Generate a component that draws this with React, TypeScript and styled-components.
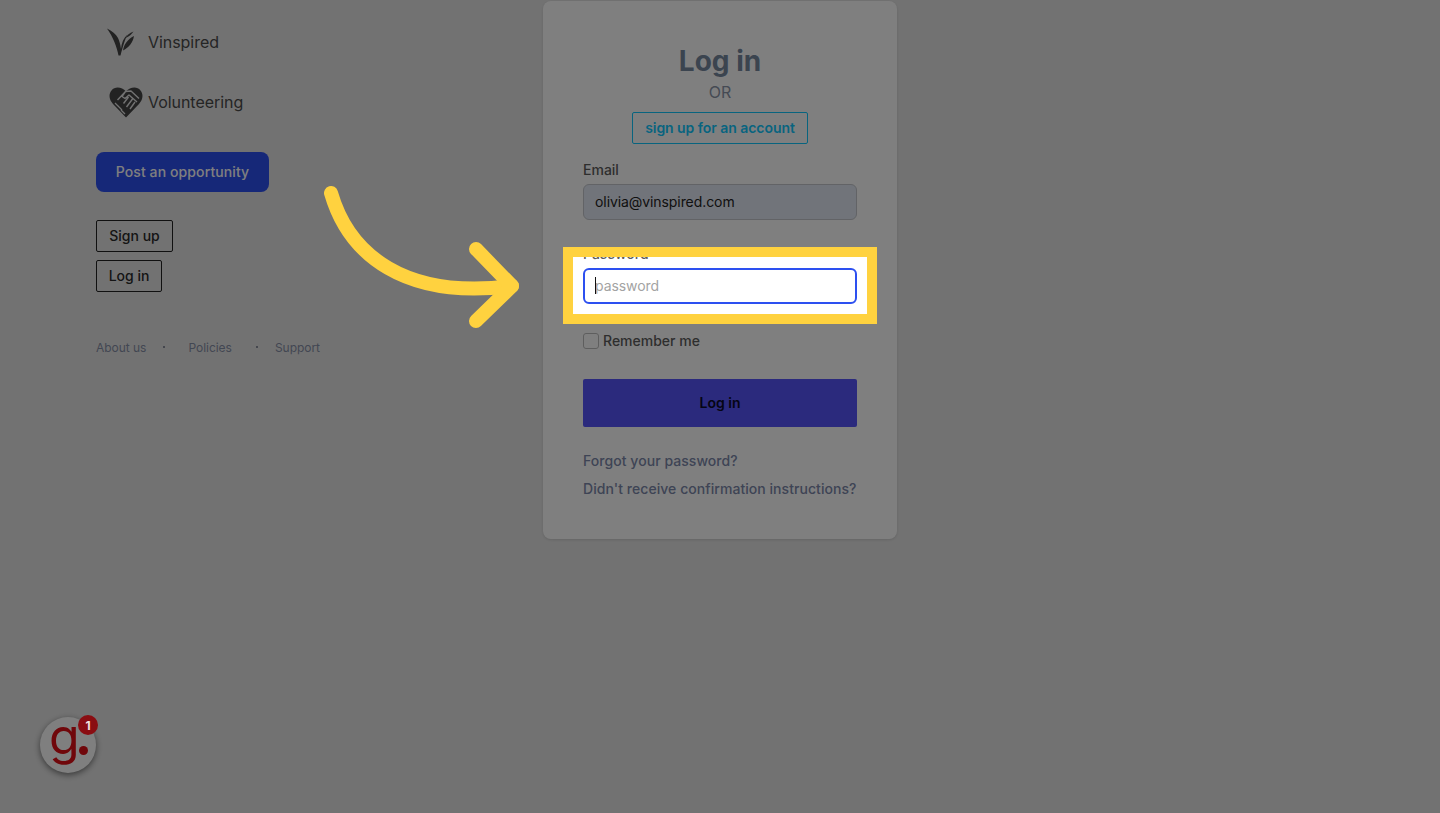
import React from "react"
import styled, { createGlobalStyle } from "styled-components"

const GlobalStyle = createGlobalStyle`
  html, body {
    margin: 0;
    padding: 0;
    background: #e5e5e5;
  }
  * {
    box-sizing: border-box;
  }
  body {
    font-family: Inter, "Liberation Sans", sans-serif;
  }
`

const VinspiredLogo = () => (
  <svg width="28" height="28" viewBox="0 0 28 28" fill="#444">
    <path d="M0 0.5 C5 3 9 6 11 10 C12.5 13 13.5 17 14 21 C14.5 15 16.5 10 20.5 6.5 C18 11.5 16 18 13.5 27.5 L11.5 27.5 C10 19 6 9 0 0.5 Z" />
    <path d="M16 22.5 C17 16 20.5 11.5 27 8 C26 14 22 19.5 16 22.5 Z" />
    <path d="M18.5 10 C20 7 22.5 5 26.5 3.5 C25 6 22 8.5 18.5 10 Z" />
  </svg>
)

const HeartLogo = () => (
  <svg width="34" height="31" viewBox="0 0 34 31">
    <path
      fill="#444"
      d="M17 4.5 C13 0 6 -1 2.5 3.5 C-1 8 0.5 13 4 17 L17 30.5 L30 17 C33.5 13 35 8 31.5 3.5 C28 -1 21 0 17 4.5 Z"
    />
    <path
      fill="none"
      stroke="#e5e5e5"
      strokeWidth="1.4"
      strokeLinejoin="round"
      d="M8.5 13 L16.5 4.5 L22 4 L30 11.5 M16.5 4.5 L13 9.5 L16 11.5 L20 8 L28 15 M23.5 12 L17.5 20 M26 15 L21 22 M19.5 10 L14.5 16.5"
    />
    <path
      stroke="#e5e5e5"
      strokeWidth="1.3"
      d="M6 16 L10 20 M9 19 L13 23 M12 23 L16 27"
    />
  </svg>
)

const App = () => {
  return (
    <Page>
      <GlobalStyle />
      <Layout>
        <Sidebar>
          <BrandRow>
            <BrandIcon $right={13}>
              <VinspiredLogo />
            </BrandIcon>
            Vinspired
          </BrandRow>
          <BrandRow>
            <BrandIcon $right={5}>
              <HeartLogo />
            </BrandIcon>
            Volunteering
          </BrandRow>
          <PostButton>Post an opportunity</PostButton>
          <OutlineButton $width={77}>Sign up</OutlineButton>
          <OutlineButton $width={66}>Log in</OutlineButton>
          <FooterLinks>
            <FooterLink>About us</FooterLink>
            <FooterDot $before={17} $after={23} />
            <FooterLink>Policies</FooterLink>
            <FooterDot $before={24} $after={17} />
            <FooterLink>Support</FooterLink>
          </FooterLinks>
        </Sidebar>
        <Card>
          <Title>Log in</Title>
          <OrText>OR</OrText>
          <SignUpLink>sign up for an account</SignUpLink>
          <FieldLabel>Email</FieldLabel>
          <TextInput $filled readOnly value="olivia@vinspired.com" />
          <FieldLabel $gap={24}>Password</FieldLabel>
          <InputWrap>
            <TextInput $focused readOnly placeholder="password" />
            <Caret />
          </InputWrap>
          <RememberRow>
            <CheckBox />
            <RememberText>Remember me</RememberText>
          </RememberRow>
          <SubmitButton>Log in</SubmitButton>
          <CardLink>Forgot your password?</CardLink>
          <CardLink>Didn't receive confirmation instructions?</CardLink>
        </Card>
      </Layout>
      <ChatBubble>
        <ChatLetter>g</ChatLetter>
        <ChatDot />
        <ChatBadge>1</ChatBadge>
      </ChatBubble>
      <Spotlight />
      <Arrow viewBox="0 0 215 160" width="215" height="160">
        <path
          d="M16 18 C34 80 90 125 197 111"
          fill="none"
          stroke="#ffd23f"
          strokeWidth="14"
          strokeLinecap="round"
        />
        <path
          d="M161 74 L197 111 L161 146"
          fill="none"
          stroke="#ffd23f"
          strokeWidth="14"
          strokeLinecap="round"
          strokeLinejoin="round"
        />
      </Arrow>
    </Page>
  )
}

const Page = styled.div`
  position: relative;
  width: 100%;
  height: 813px;
  overflow: hidden;
  background: #e5e5e5;
`
const Layout = styled.div`
  display: grid;
  grid-template-columns: 1fr 354px 1fr;
  align-items: start;
  padding: 0 96px;
`
const Sidebar = styled.div`
  display: flex;
  flex-direction: column;
  align-items: flex-start;
  padding-top: 22px;
`
const BrandRow = styled.div`
  display: flex;
  align-items: center;
  height: 40px;
  margin-bottom: 20px;
  font-size: 16px;
  letter-spacing: -0.05px;
  color: #4a4a4a;
`
const BrandIcon = styled.div<{ $right: number }>`
  width: 52px;
  display: flex;
  justify-content: flex-end;
  padding-right: ${(p) => p.$right}px;
`
const PostButton = styled.button`
  width: 173px;
  height: 40px;
  margin-top: 10px;
  margin-bottom: 28px;
  padding: 0 0 1px;
  border: none;
  border-radius: 8px;
  background: #2d50f0;
  color: #fff;
  font-family: inherit;
  font-size: 14px;
  font-weight: 500;
  letter-spacing: 0.1px;
`
const OutlineButton = styled.button<{ $width: number }>`
  width: ${(p) => p.$width}px;
  height: 32px;
  padding: 0 0 2px;
  margin-bottom: 8px;
  background: transparent;
  border: 1px solid #222;
  border-radius: 2px;
  color: #2a2a2a;
  font-family: inherit;
  font-size: 14px;
  font-weight: 500;
`
const FooterLinks = styled.div`
  display: flex;
  align-items: center;
  margin-top: 39px;
  height: 16px;
`
const FooterLink = styled.span`
  font-size: 12px;
  letter-spacing: -0.03px;
  color: #858ea6;
`
const FooterDot = styled.span<{ $before: number; $after: number }>`
  width: 2px;
  height: 2px;
  margin: 0 ${(p) => p.$after}px 0 ${(p) => p.$before}px;
  border-radius: 50%;
  background: #6b7285;
`
const Card = styled.div`
  display: flex;
  flex-direction: column;
  align-items: flex-start;
  margin-top: 1px;
  padding: 42px 40px 32px;
  background: #fff;
  border-radius: 8px;
  box-shadow: 0 1px 3px rgba(0, 0, 0, 0.12);
`
const Title = styled.h1`
  width: 100%;
  margin: 0;
  font-size: 28px;
  line-height: 36px;
  font-weight: 700;
  text-align: center;
  color: #76889f;
`
const OrText = styled.div`
  width: 100%;
  margin-top: 1px;
  font-size: 16px;
  line-height: 24px;
  text-align: center;
  color: #8b95a8;
`
const SignUpLink = styled.a`
  align-self: center;
  height: 32px;
  margin-top: 8px;
  padding: 0 12px;
  border: 1px solid #10c8ff;
  border-radius: 2px;
  font-size: 14px;
  font-weight: 600;
  letter-spacing: -0.05px;
  line-height: 30px;
  color: #10c8ff;
`
const FieldLabel = styled.label<{ $gap?: number }>`
  margin-top: ${(p) => p.$gap ?? 16}px;
  margin-bottom: 4px;
  font-size: 14px;
  font-weight: 500;
  line-height: 20px;
  color: #5c5c5c;
`
const InputWrap = styled.div`
  position: relative;
  width: 100%;
`
const TextInput = styled.input<{ $filled?: boolean; $focused?: boolean }>`
  display: block;
  width: 100%;
  height: 36px;
  padding: 0 ${(p) => (p.$focused ? "10px" : "11px")} 2px;
  outline: none;
  border: ${(p) => (p.$focused ? "2px solid #2d50f0" : "1px solid #c4c7cc")};
  border-radius: 6px;
  background: ${(p) => (p.$filled ? "#e2e8f4" : "#fff")};
  color: #222;
  font-family: inherit;
  font-size: 14px;
  letter-spacing: -0.08px;
  &::placeholder {
    color: #a3a3a3;
  }
`
const Caret = styled.span`
  position: absolute;
  left: 12px;
  top: 9px;
  width: 1px;
  height: 17px;
  background: #111;
`
const RememberRow = styled.div`
  display: flex;
  align-items: center;
  gap: 4px;
  height: 20px;
  margin-top: 27px;
  font-size: 14px;
  font-weight: 500;
  color: #5c5c5c;
`
const RememberText = styled.span`
  margin-top: -2px;
`
const CheckBox = styled.span`
  width: 16px;
  height: 16px;
  border: 1px solid #bdbdbd;
  border-radius: 3px;
`
const SubmitButton = styled.button`
  width: 100%;
  height: 48px;
  margin-top: 28px;
  margin-bottom: 24px;
  padding: 0 0 2px;
  border: none;
  border-radius: 2px;
  background: #5654fa;
  color: #0a0a2a;
  font-family: inherit;
  font-size: 14px;
  font-weight: 600;
`
const CardLink = styled.a`
  margin-bottom: 8px;
  font-size: 14px;
  font-weight: 500;
  line-height: 20px;
  letter-spacing: 0.05px;
  color: #7c88aa;
  white-space: nowrap;
`
const ChatBubble = styled.div`
  position: absolute;
  left: 40px;
  top: 717px;
  width: 56px;
  height: 56px;
  display: flex;
  align-items: flex-start;
  justify-content: flex-start;
  padding-left: 9px;
  border-radius: 50%;
  background: #fff;
  box-shadow: 0 2px 6px rgba(0, 0, 0, 0.5);
`
const ChatLetter = styled.span`
  margin-top: -6px;
  font-family: Inter, sans-serif;
  font-size: 50px;
  font-weight: 400;
  line-height: 50px;
  color: #e00f16;
`
const ChatDot = styled.span`
  position: absolute;
  left: 39px;
  top: 29px;
  width: 9px;
  height: 9px;
  border-radius: 50%;
  background: #e00f16;
`
const ChatBadge = styled.span`
  position: absolute;
  z-index: 2;
  top: -2px;
  right: -2px;
  width: 20px;
  height: 20px;
  display: flex;
  align-items: center;
  justify-content: center;
  border-radius: 50%;
  background: #8a0d12;
  color: #f2e2e2;
  font-size: 12px;
  font-weight: 700;
`
const Spotlight = styled.div`
  position: absolute;
  left: 563px;
  top: 247px;
  width: 314px;
  height: 77px;
  border: 10px solid #ffd23f;
  box-shadow: 0 0 0 2000px rgba(0, 0, 0, 0.5);
`
const Arrow = styled.svg`
  position: absolute;
  left: 315px;
  top: 175px;
`

export default App
